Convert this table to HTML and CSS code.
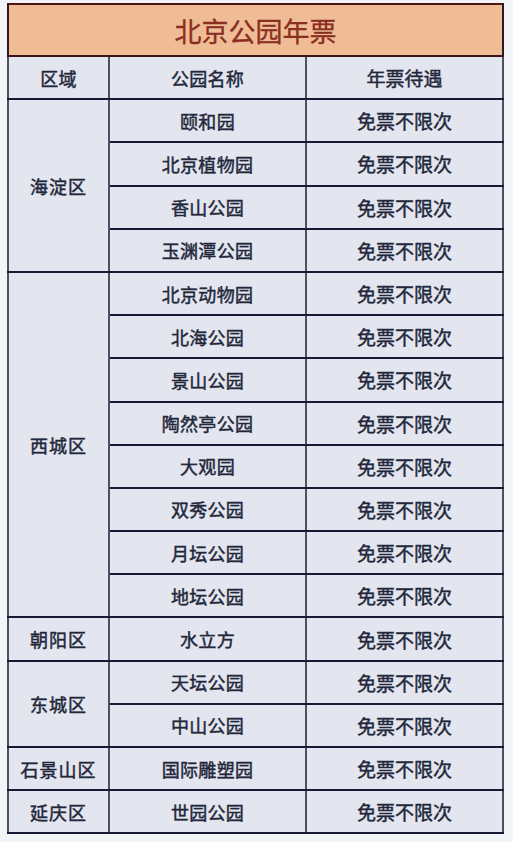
FILE: index.html
```html
<!DOCTYPE html>
<html lang="zh-CN">
<head>
<meta charset="utf-8">
<title>北京公园年票</title>
<link rel="stylesheet" href="styles.css">
</head>
<body>
<table class="sheet">
  <colgroup>
    <col class="c-area">
    <col class="c-park">
    <col class="c-perk">
  </colgroup>
  <thead>
    <tr class="title-row"><th colspan="3" class="title">北京公园年票</th></tr>
    <tr class="head-row"><th>区域</th><th>公园名称</th><th class="perk">年票待遇</th></tr>
  </thead>
  <tbody>
    <tr><td rowspan="4" class="area">海淀区</td><td>颐和园</td><td class="perk">免票不限次</td></tr>
    <tr><td>北京植物园</td><td class="perk">免票不限次</td></tr>
    <tr><td>香山公园</td><td class="perk">免票不限次</td></tr>
    <tr><td>玉渊潭公园</td><td class="perk">免票不限次</td></tr>
    <tr><td rowspan="8" class="area">西城区</td><td>北京动物园</td><td class="perk">免票不限次</td></tr>
    <tr><td>北海公园</td><td class="perk">免票不限次</td></tr>
    <tr><td>景山公园</td><td class="perk">免票不限次</td></tr>
    <tr><td>陶然亭公园</td><td class="perk">免票不限次</td></tr>
    <tr><td>大观园</td><td class="perk">免票不限次</td></tr>
    <tr><td>双秀公园</td><td class="perk">免票不限次</td></tr>
    <tr><td>月坛公园</td><td class="perk">免票不限次</td></tr>
    <tr><td>地坛公园</td><td class="perk">免票不限次</td></tr>
    <tr><td class="area">朝阳区</td><td>水立方</td><td class="perk">免票不限次</td></tr>
    <tr><td rowspan="2" class="area">东城区</td><td>天坛公园</td><td class="perk">免票不限次</td></tr>
    <tr><td>中山公园</td><td class="perk">免票不限次</td></tr>
    <tr><td class="area">石景山区</td><td>国际雕塑园</td><td class="perk">免票不限次</td></tr>
    <tr><td class="area">延庆区</td><td>世园公园</td><td class="perk">免票不限次</td></tr>
  </tbody>
</table>
</body>
</html>
```

FILE: styles.css
```css
html, body {
  margin: 0;
  padding: 0;
  background: #f3f4f7;
}

body {
  font-family: "Noto Sans CJK SC", "Noto Sans", sans-serif;
  color: #22273a;
}

.sheet {
  margin: 3px 0 0 7px;
  width: 495px;
  border-collapse: collapse;
  table-layout: fixed;
  background: #e3e5ef;
}

.c-area { width: 101px; }
.c-park { width: 197px; }
.c-perk { width: 197px; }

.sheet th,
.sheet td {
  border-top: 2px solid #161b33;
  border-bottom: 2px solid #161b33;
  border-left: 2px solid #4b5064;
  border-right: 2px solid #4b5064;
  text-align: center;
  vertical-align: middle;
  padding: 0;
  font-size: 18px;
  font-weight: 400;
  -webkit-text-stroke: 0.45px #22273a;
  line-height: 1;
  letter-spacing: 0.3px;
}

.sheet .perk {
  font-size: 19px;
  letter-spacing: 0;
}

.sheet tbody tr,
.head-row {
  height: 43.2px;
}

.title-row {
  height: 52px;
}

.sheet .title {
  background: #f0bc95;
  color: #8a2e22;
  -webkit-text-stroke: 0.3px #8a2e22;
  font-size: 27px;
  font-weight: 400;
  letter-spacing: 0;
  border-top: 2px solid #4a1616;
  border-bottom: 2px solid #3a1418;
  border-left: 2px solid #2a1a22;
  border-right: 2px solid #2a1a22;
}

.sheet .area {
  font-size: 18px;
  letter-spacing: 1px;
}
```
